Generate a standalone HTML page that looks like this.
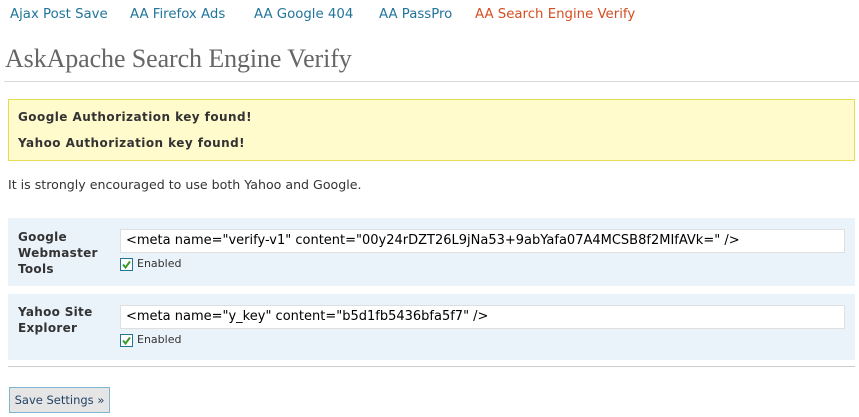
<!DOCTYPE html>
<html><head><meta charset="utf-8"><style>
body{margin:0;width:859px;height:417px;background:#fff;font-family:"DejaVu Sans",Verdana,sans-serif;position:relative;overflow:hidden;color:#333}
.a{position:absolute;white-space:nowrap}
.nav{top:7px;font-size:13.3px;color:#21759b}
h1{position:absolute;left:5px;top:44px;margin:0;font:26px "Liberation Serif","DejaVu Serif",serif;color:#666;letter-spacing:-0.1px}
.hr{position:absolute;height:1px;background:#dadada}
.y{position:absolute;left:8px;top:99px;width:845px;height:60px;background:#fffbcc;border:1px solid #e6db55}
.b{font-weight:bold;font-size:12px;letter-spacing:0.45px;color:#333}
.sec{position:absolute;left:8px;width:847px;background:#eaf2fa}
.in{position:absolute;left:112px;width:725px;height:24px;border:1px solid #dfdfdf;background:#fff;font-size:13px;line-height:22px;padding-left:5px;box-sizing:border-box;color:#000;white-space:nowrap}
.cb{position:absolute;left:112px;width:11px;height:11px;border:1px solid #21759b;background:#fff}
.cb svg{position:absolute;left:1px;top:1px}
.en{position:absolute;left:129px;font-size:11px;color:#333}
.lab{position:absolute;left:10px;font-weight:bold;font-size:12px;letter-spacing:0.3px;line-height:16px;color:#333}
</style></head><body>
<div class="a nav" style="left:10px">Ajax Post Save</div>
<div class="a nav" style="left:130px">AA Firefox Ads</div>
<div class="a nav" style="left:254px">AA Google 404</div>
<div class="a nav" style="left:379px">AA PassPro</div>
<div class="a nav" style="left:475px;color:#d54e21">AA Search Engine Verify</div>
<h1>AskApache Search Engine Verify</h1>
<div class="hr" style="left:4px;top:81px;width:855px"></div>
<div class="y">
<div class="a b" style="left:9px;top:10px">Google Authorization key found!</div>
<div class="a b" style="left:9px;top:36px">Yahoo Authorization key found!</div>
</div>
<div class="a" style="left:8px;top:177px;font-size:12.6px">It is strongly encouraged to use both Yahoo and Google.</div>
<div class="sec" style="top:218px;height:68px">
<div class="lab" style="top:11px">Google<br>Webmaster<br>Tools</div>
<div class="in" style="top:11px">&lt;meta name="verify-v1" content="00y24rDZT26L9jNa53+9abYafa07A4MCSB8f2MIfAVk=" /&gt;</div>
<div class="cb" style="top:40px"><svg width="9" height="9"><path d="M1 4.5L3.5 7.5L8 1.5" stroke="#3a9a2a" stroke-width="2" fill="none"/></svg></div>
<div class="en" style="top:39px">Enabled</div>
</div>
<div class="sec" style="top:294px;height:66px">
<div class="lab" style="top:10px">Yahoo Site<br>Explorer</div>
<div class="in" style="top:11px">&lt;meta name="y_key" content="b5d1fb5436bfa5f7" /&gt;</div>
<div class="cb" style="top:40px"><svg width="9" height="9"><path d="M1 4.5L3.5 7.5L8 1.5" stroke="#3a9a2a" stroke-width="2" fill="none"/></svg></div>
<div class="en" style="top:39px">Enabled</div>
</div>
<div class="hr" style="left:8px;top:366px;width:847px;background:#ccc"></div>
<div class="a" style="left:9px;top:387px;width:101px;height:26px;background:#e5e5e5;border:1px solid #80b5d0;box-sizing:border-box;font-size:11.5px;line-height:24px;text-align:center;color:#246">Save Settings »</div>
</body></html>
